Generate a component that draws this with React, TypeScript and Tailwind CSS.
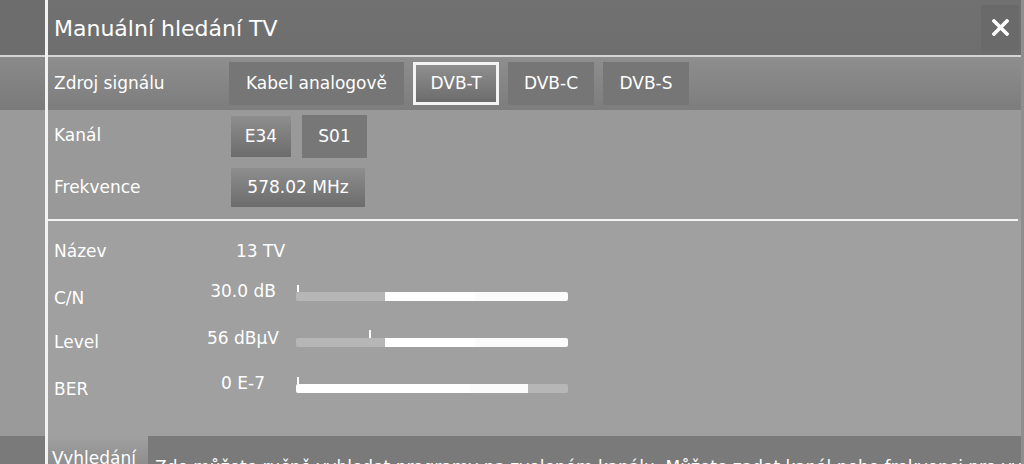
import React from "react";

type Meter = {
  label: string;
  value: string;
  rowH: string;
  labelMt: string;
  tickMt: string;
  tickH: string;
  tickMl: string;
  segments: { w: string; c: string }[];
};

const meters: Meter[] = [
  {
    label: "C/N",
    value: "30.0 dB",
    rowH: "h-[47px]",
    labelMt: "mt-[17px]",
    tickMt: "mt-[14px]",
    tickH: "h-[7px]",
    tickMl: "ml-[1px]",
    segments: [
      { w: "w-[89px]", c: "bg-[#b6b6b6]" },
      { w: "w-[90px]", c: "bg-white" },
      { w: "flex-1", c: "bg-[#fbfbfb]" },
    ],
  },
  {
    label: "Level",
    value: "56 dBµV",
    rowH: "h-[45px]",
    labelMt: "mt-[14px]",
    tickMt: "mt-[12px]",
    tickH: "h-[8px]",
    tickMl: "ml-[73px]",
    segments: [
      { w: "w-[89px]", c: "bg-[#b6b6b6]" },
      { w: "w-[90px]", c: "bg-white" },
      { w: "flex-1", c: "bg-[#fbfbfb]" },
    ],
  },
  {
    label: "BER",
    value: "0 E-7",
    rowH: "h-[73px]",
    labelMt: "mt-[16px]",
    tickMt: "mt-[14px]",
    tickH: "h-[7px]",
    tickMl: "ml-[1px]",
    segments: [
      { w: "w-[174px]", c: "bg-white" },
      { w: "w-[58px]", c: "bg-[#fbfbfb]" },
      { w: "flex-1", c: "bg-[#b6b6b6]" },
    ],
  },
];

function SourceButton({ text, active, w }: { text: string; active?: boolean; w: string }) {
  return (
    <div
      className={`${w} h-[43px] flex items-center justify-center text-[17px] text-white ${
        active
          ? "border-[3px] border-[#f4f4f4] bg-gradient-to-b from-[#8f8f8f] to-[#6c6c6c]"
          : "bg-[#767676]"
      }`}
    >
      {text}
    </div>
  );
}

export default function App() {
  return (
    <div className="w-[1024px] h-[464px] overflow-hidden flex bg-[#9d9d9d] text-white font-['DejaVu_Sans',sans-serif]">
      {/* left strip */}
      <div className="w-[45px] shrink-0 flex flex-col">
        <div className="h-[55px] bg-[#6d6d6d]" />
        <div className="h-[2px] bg-[#d4d4d4]" />
        <div className="h-[53px] bg-gradient-to-b from-[#8a8a8a] to-[#7a7a7a]" />
        <div className="flex-1 bg-[#9a9a9a]" />
        <div className="h-[28px] bg-[#7a7a7a]" />
      </div>
      <div className="w-[3px] shrink-0 bg-[#f2f2f2]" />

      {/* main panel */}
      <div className="flex-1 min-w-0 flex flex-col border-r-[3px] border-[#8e8e8e]">
        {/* header */}
        <div className="h-[55px] shrink-0 bg-gradient-to-b from-[#717171] to-[#6e6e6e] flex items-center justify-between pl-[6px] pr-[2px]">
          <span className="text-[22px] leading-[26px] mt-[2px]">Manuální hledání TV</span>
          <div className="w-[38px] h-[46px] bg-[#6a6a6a] flex items-center justify-center">
            <svg width="17" height="17" viewBox="0 0 17 17">
              <path d="M2 2 L15 15 M15 2 L2 15" stroke="white" strokeWidth="3.6" strokeLinecap="square" />
            </svg>
          </div>
        </div>
        <div className="h-[2px] shrink-0 bg-[#d4d4d4]" />

        {/* signal source */}
        <div className="h-[53px] shrink-0 bg-gradient-to-b from-[#8e8e8e] to-[#7d7d7d] flex items-center">
          <div className="w-[181px] pl-[6px] text-[17px]">Zdroj signálu</div>
          <div className="flex gap-[9px]">
            <SourceButton text="Kabel analogově" w="w-[175px]" />
            <SourceButton text="DVB-T" w="w-[86px]" active />
            <SourceButton text="DVB-C" w="w-[86px]" />
            <SourceButton text="DVB-S" w="w-[86px]" />
          </div>
        </div>

        {/* channel / frequency */}
        <div className="h-[109px] shrink-0 bg-[#999999] flex flex-col">
          <div className="h-[55px] flex items-start pt-[5px]">
            <div className="w-[183px] pl-[6px] text-[17px] leading-[20px] mt-[10px]">Kanál</div>
            <div className="flex gap-[11px] items-start">
              <div className="w-[60px] h-[41px] mt-[1px] bg-gradient-to-b from-[#8e8e8e] to-[#6c6c6c] flex items-center justify-center text-[17px]">
                E34
              </div>
              <div className="w-[65px] h-[43px] bg-[#777777] flex items-center justify-center text-[17px]">
                S01
              </div>
            </div>
          </div>
          <div className="flex items-start pt-[3px]">
            <div className="w-[183px] pl-[6px] text-[17px] leading-[20px] mt-[9px]">Frekvence</div>
            <div className="w-[134px] h-[39px] bg-gradient-to-b from-[#8e8e8e] to-[#6c6c6c] flex items-center justify-center text-[17px]">
              578.02 MHz
            </div>
          </div>
        </div>
        <div className="h-[2px] shrink-0 bg-[#f4f4f4] mr-[3px]" />

        {/* measurements */}
        <div className="flex-1 bg-[#a0a0a0] flex flex-col">
          <div className="h-[50px] flex items-start text-[17px] leading-[20px]">
            <div className="w-[188px] pl-[6px] mt-[20px]">Název</div>
            <div className="mt-[20px]">13 TV</div>
          </div>
          {meters.map((m) => (
            <div key={m.label} className={`${m.rowH} flex items-start text-[17px] leading-[20px]`}>
              <div className={`w-[142px] pl-[6px] ${m.labelMt}`}>{m.label}</div>
              <div className="w-[106px] text-center mt-[10px] whitespace-nowrap">{m.value}</div>
              <div className={`w-[272px] flex flex-col ${m.tickMt}`}>
                <div className={`w-[2px] ${m.tickH} bg-white ${m.tickMl}`} />
                <div className="h-[9px] flex rounded-[2px] overflow-hidden">
                  {m.segments.map((s, i) => (
                    <div key={i} className={`${s.w} ${s.c}`} />
                  ))}
                </div>
              </div>
            </div>
          ))}
        </div>

        {/* help bar */}
        <div className="h-[28px] shrink-0 flex">
          <div className="w-[100px] shrink-0 bg-gradient-to-b from-[#a0a0a0] to-[#8e8e8e] pl-[4px] pt-[11px] text-[17px] leading-[22px] whitespace-nowrap overflow-hidden">
            Vyhledání
          </div>
          <div className="flex-1 min-w-0 bg-[#7a7a7a] pl-[7px] pt-[21px] text-[17px] leading-[20px] whitespace-nowrap overflow-hidden">
            Zde můžete ručně vyhledat programy na zvoleném kanálu. Můžete zadat kanál nebo frekvenci pro vyhledání.
          </div>
        </div>
      </div>
    </div>
  );
}
